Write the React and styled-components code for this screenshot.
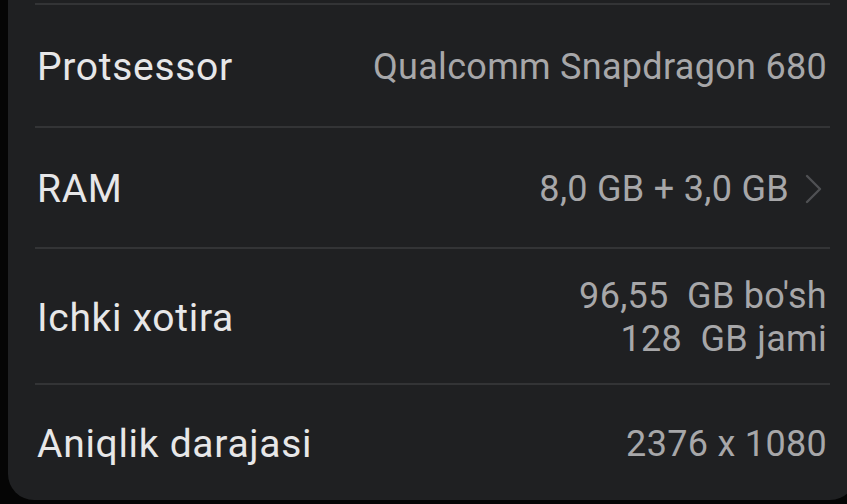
import styled, { createGlobalStyle } from 'styled-components';

const GlobalStyle = createGlobalStyle`
  html, body {
    margin: 0;
    padding: 0;
    background: #050505;
    overflow: hidden;
  }
`;

const Card = styled.div`
  margin-left: 8px;
  width: 848px;
  height: 500px;
  box-sizing: border-box;
  padding: 3px 26px 0 27px;
  background: #1f2022;
  border-radius: 0 0 26px 26px;
  font-family: Roboto, 'Noto Sans', sans-serif;
`;

const Row = styled.div`
  display: flex;
  align-items: center;
  justify-content: space-between;
  height: ${(p) => p.$h}px;
  padding: 3px 3px 0 2px;
  border-top: 2px solid #333436;
  box-sizing: border-box;
`;

const Label = styled.div`
  font-size: 39px;
  color: #e7e7e8;
  letter-spacing: 0.7px;
`;

const Values = styled.div`
  display: flex;
  flex-direction: column;
  align-items: flex-end;
  font-size: 36px;
  line-height: 43px;
  color: #a7a7a9;
  letter-spacing: 0.3px;
  white-space: pre;
`;

const Side = styled.div`
  display: flex;
  align-items: center;
  gap: 16px;
  margin-right: 4px;
`;

const Chevron = () => (
  <svg width="18" height="30" viewBox="0 0 18 30" fill="none">
    <path d="M2 2 L15 15 L2 28" stroke="#4f5053" strokeWidth="2.4" strokeLinecap="round" strokeLinejoin="round" />
  </svg>
);

export default function App() {
  return (
    <>
      <GlobalStyle />
      <Card>
        <Row $h={123}>
          <Label>Protsessor</Label>
          <Values>Qualcomm Snapdragon 680</Values>
        </Row>
        <Row $h={121}>
          <Label>RAM</Label>
          <Side>
            <Values>8,0 GB + 3,0 GB</Values>
            <Chevron />
          </Side>
        </Row>
        <Row $h={136}>
          <Label>Ichki xotira</Label>
          <Values>
            <span>96,55  GB bo'sh</span>
            <span>128  GB jami</span>
          </Values>
        </Row>
        <Row $h={117}>
          <Label>Aniqlik darajasi</Label>
          <Values>2376 x 1080</Values>
        </Row>
      </Card>
    </>
  );
}
